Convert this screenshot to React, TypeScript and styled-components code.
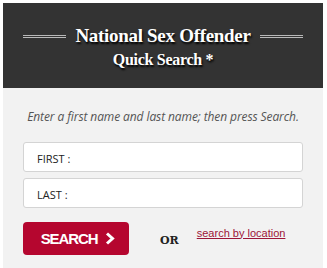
import React from 'react';
import styled, { createGlobalStyle } from 'styled-components';

const GlobalStyle = createGlobalStyle`
  html, body {
    margin: 0;
    padding: 0;
    background: #ffffff;
  }
`;

const Widget = styled.div`
  width: 320px;
  height: 265px;
  margin: 3px 0 0 3px;
  background: #f2f2f2;
  display: flex;
  flex-direction: column;
`;

const Header = styled.div`
  height: 85px;
  background: #333333;
  display: flex;
  flex-direction: column;
  align-items: center;
  justify-content: center;
  gap: 2px;
  padding-top: 3px;
  box-sizing: border-box;
`;

const TitleRow = styled.div`
  display: flex;
  align-items: center;
  gap: 9px;
`;

const Rule = styled.div`
  width: 43px;
  height: 1px;
  border-top: 1px solid #b9b9b9;
  border-bottom: 1px solid #b9b9b9;
`;

const Title = styled.div<{ $size: number }>`
  font-family: 'Liberation Serif', serif;
  font-weight: bold;
  font-size: ${(p) => p.$size}px;
  letter-spacing: -0.3px;
  line-height: 1.25;
  color: #ffffff;
  text-shadow: 1px 2px 2px #000000;
`;

const Body = styled.div`
  display: flex;
  flex-direction: column;
  padding: 20px 20px 0 20px;
`;

const Hint = styled.div`
  font-family: 'Open Sans', sans-serif;
  font-style: italic;
  font-size: 12px;
  letter-spacing: -0.1px;
  white-space: nowrap;
  color: #555555;
  text-align: center;
  margin: 0 -10px 17px;
`;

const Field = styled.div`
  height: 30px;
  background: #ffffff;
  border: 1px solid #d4d4d4;
  border-radius: 3px;
  box-sizing: border-box;
  display: flex;
  align-items: center;
  padding: 2px 0 0 13px;
  margin-bottom: 6px;
  font-family: 'Open Sans', sans-serif;
  font-size: 11px;
  color: #222222;
`;

const Actions = styled.div`
  display: flex;
  align-items: center;
  margin-top: 8px;
`;

const SearchButton = styled.button`
  width: 106px;
  height: 33px;
  background: #b5062f;
  border: none;
  border-radius: 4px;
  display: flex;
  align-items: center;
  justify-content: center;
  gap: 8px;
  font-family: 'Liberation Sans', sans-serif;
  font-weight: bold;
  font-size: 15px;
  letter-spacing: -1.1px;
  color: #ffffff;
  padding: 0 0 0 4px;
`;

const Or = styled.span`
  font-family: 'DejaVu Serif', serif;
  font-weight: bold;
  font-size: 11px;
  color: #222222;
  margin: 4px 0 0 31px;
`;

const LocationLink = styled.a`
  font-family: 'Liberation Sans', sans-serif;
  font-size: 11px;
  color: #9d1538;
  text-decoration: underline;
  margin: -12px 0 0 18px;
`;

export default function App() {
  return (
    <>
      <GlobalStyle />
      <Widget>
        <Header>
          <TitleRow>
            <Rule />
            <Title $size={19}>National Sex Offender</Title>
            <Rule />
          </TitleRow>
          <Title $size={16}>Quick Search *</Title>
        </Header>
        <Body>
          <Hint>Enter a first name and last name; then press Search.</Hint>
          <Field>FIRST :</Field>
          <Field>LAST :</Field>
          <Actions>
            <SearchButton>
              SEARCH
              <svg width="10" height="13" viewBox="0 0 10 13">
                <path d="M2 1.5 L7.5 6.5 L2 11.5" fill="none" stroke="#fff" strokeWidth="3" />
              </svg>
            </SearchButton>
            <Or>OR</Or>
            <LocationLink href="#">search by location</LocationLink>
          </Actions>
        </Body>
      </Widget>
    </>
  );
}
